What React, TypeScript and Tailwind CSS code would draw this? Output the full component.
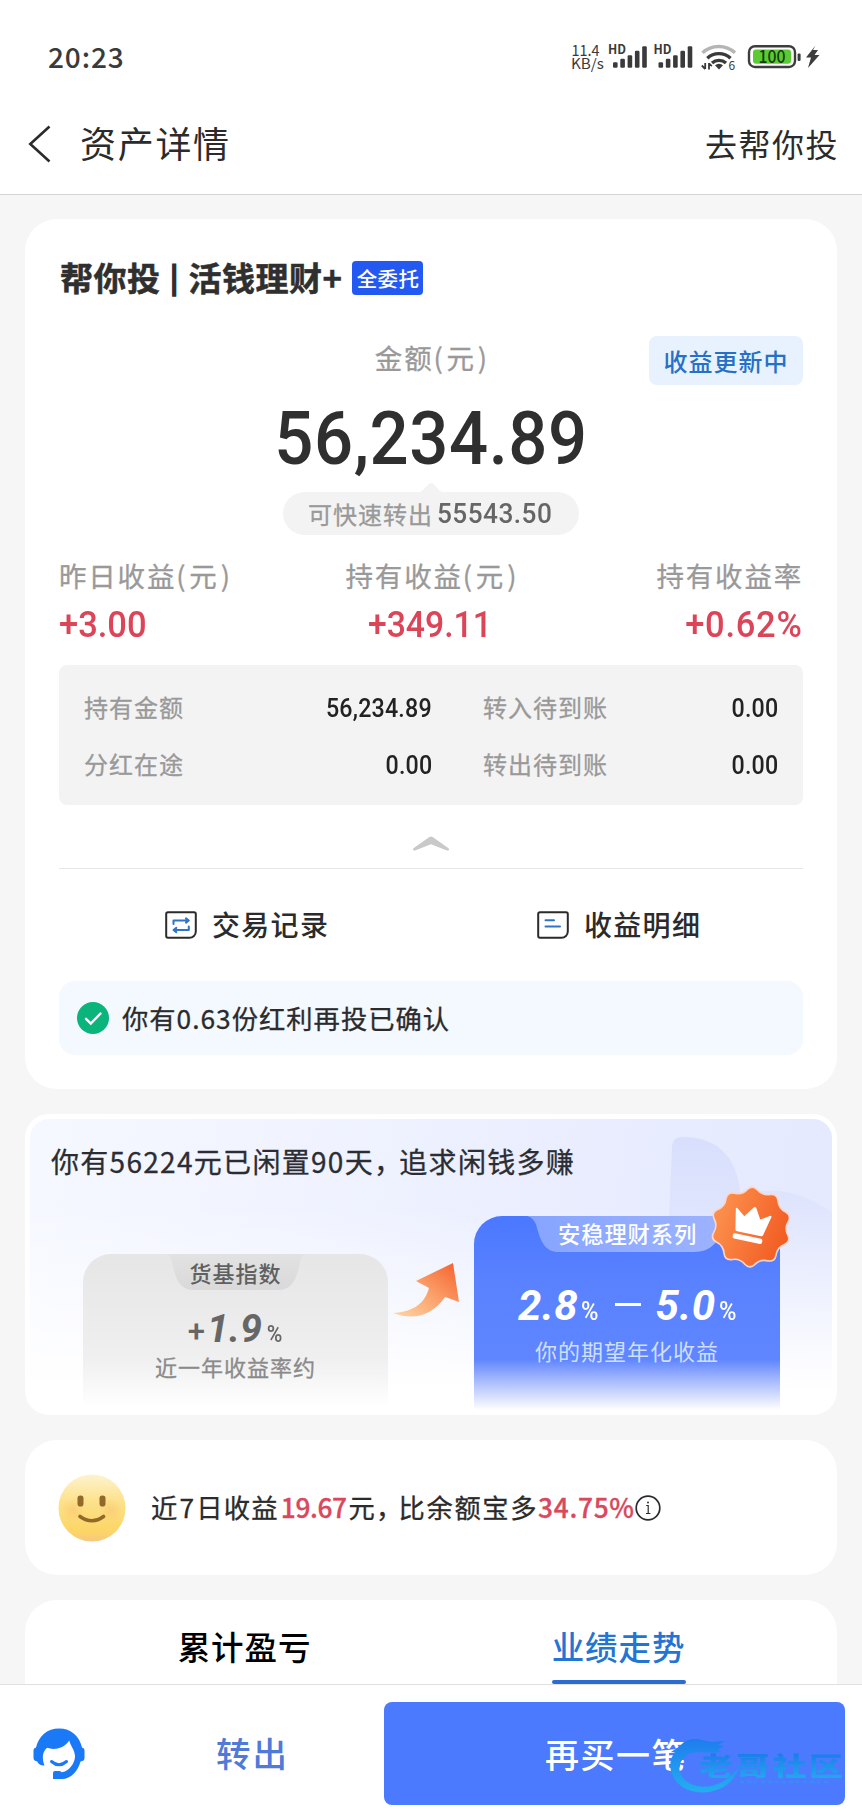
import type { ReactNode } from "react";

const ROOT_FONT = "font-['Noto_Sans_CJK_SC','Noto_Sans_CJK_JP',sans-serif]";
const NUM = "font-['Roboto','Liberation_Sans',sans-serif] font-medium";
const SOFT = "[-webkit-text-stroke:0.3px]";

function SignalBars({ x }: { x: number }) {
  const heights = [5.5, 9, 12.5, 17, 21.5];
  return (
    <g fill="#3a3a3a">
      {heights.map((h, i) => (
        <rect key={h} x={x + i * 7.3} y={24.7 - h} width="4.6" height={h} rx="1.2" />
      ))}
    </g>
  );
}

function StatusIcons() {
  return (
    <svg width="252" height="28" viewBox="0 0 252 28" className="overflow-visible font-['Noto_Sans_CJK_SC',sans-serif]">
      <g fill="#3a3a3a">
        <text x="0.5" y="12.6" fontSize="15.5" textLength="28" lengthAdjust="spacingAndGlyphs">11.4</text>
        <text x="0" y="25.8" fontSize="14.5" textLength="33" lengthAdjust="spacingAndGlyphs">KB/s</text>
        <text x="37" y="10.8" fontSize="12.5" fontWeight="700" textLength="18" lengthAdjust="spacingAndGlyphs">HD</text>
        <text x="82.5" y="10.8" fontSize="12.5" fontWeight="700" textLength="18" lengthAdjust="spacingAndGlyphs">HD</text>
        <text x="157.5" y="27.3" fontSize="12">6</text>
      </g>
      <SignalBars x={42} />
      <SignalBars x={87.5} />
      <g fill="none" strokeWidth="3.4">
        <path d="M131.5 9.8A24 24 0 0 1 164 9.8" stroke="#b5b5b5" />
        <path d="M136.3 15.2A17 17 0 0 1 159.5 15.2" stroke="#3a3a3a" />
        <path d="M141 20A10.5 10.5 0 0 1 155 20" stroke="#3a3a3a" />
      </g>
      <path d="M144 22.200a6 6 0 0 1 8 0L148 26.500z" fill="#3a3a3a" />
      <path d="M134.2 20v6M130.8 22.5l3.4 3.5M138 26.5v-6.500M140.8 23.2L138 20.500" fill="none" stroke="#3a3a3a" strokeWidth="1.8" />
      <rect x="178" y="3.2" width="46" height="20.8" rx="6" fill="#fff" stroke="#3d3d3d" strokeWidth="2.4" />
      <rect x="182" y="6.4" width="38" height="14.4" rx="3" fill="#5ccb33" />
      <text x="187.500" y="20" fontSize="17.500" fontWeight="500" fill="#143c0b" textLength="27" lengthAdjust="spacingAndGlyphs">100</text>
      <rect x="226.6" y="10.4" width="3" height="7.5" rx="1.2" fill="#3d3d3d" />
      <path d="M244.500 2.500l-9.500 12h5l-3 10.500 11.500-13h-5l3.500-5h-5z" fill="#3d3d3d" />
    </svg>
  );
}

function Header() {
  return (
    <header className="h-[195px] border-b border-[#d4d4d4] bg-white">
      <div className="flex h-[98px] items-start justify-between pt-[43px] pr-[39px] pl-[48px] text-[#3a3a3a]">
        <div className="-mt-px text-[28px] leading-[28px] font-medium tracking-[0.9px]">20:23</div>
        <StatusIcons />
      </div>
      <div className="flex h-[92px] items-center justify-between pr-[23px] pl-[28px] text-[#2b2b2b]">
        <div className="flex items-center">
          <svg width="24" height="40" viewBox="0 0 24 40" fill="none" stroke="#2b2b2b" strokeWidth="2.6" className="mr-[28px]">
            <path d="M21.5 2.5L2.3 20l19.2 17.5" />
          </svg>
          <h1 className="-mt-[5px] text-[36px] leading-none tracking-[1.7px]">资产详情</h1>
        </div>
        <div className="-mt-[2px] text-[32px] leading-none tracking-[1.5px]">去帮你投</div>
      </div>
    </header>
  );
}

function NoteIcon({ children }: { children: ReactNode }) {
  return (
    <svg width="32" height="28" viewBox="0 0 32 28" fill="none">
      <path d="M3 1.2H29a1.8 1.8 0 0 1 1.8 1.8V20.5a6.3 6.3 0 0 1-6.3 6.3H3A1.8 1.8 0 0 1 1.2 25V3A1.8 1.8 0 0 1 3 1.2z" stroke="#2b2b2b" strokeWidth="2" />
      <g stroke="#2f74c8" strokeWidth="2" strokeLinecap="round" strokeLinejoin="round">{children}</g>
    </svg>
  );
}

function Yuan() {
  return (
    <>
      <span className="tracking-[3.8px]">(</span>元<span className="ml-[2px] tracking-[0px]">)</span>
    </>
  );
}

function Stat({ label, unit, value, align, origin }: { label: string; unit?: boolean; value: string; align: string; origin: string }) {
  return (
    <div className={`flex flex-col ${align}`}>
      <div className={`flex h-[40px] items-center text-[27.5px] leading-none tracking-[1.8px] text-[#999] ${SOFT}`}>
        <span>{label}{unit && <Yuan />}</span>
      </div>
      <div className={`mt-[7px] flex h-[44px] items-center text-[37.5px] leading-none text-[#dc4558] ${NUM} ${origin}`}>{value}</div>
    </div>
  );
}

function Row({ label, value }: { label: string; value: string }) {
  return (
    <div className="flex h-[57px] items-center justify-between leading-none">
      <span className={`text-[24px] tracking-[1px] text-[#999] ${SOFT}`}>{label}</span>
      <span className={`mt-[3px] origin-right scale-x-[0.93] text-[25px] tracking-[0.2px] text-[#222] ${NUM}`}>{value}</span>
    </div>
  );
}

function AssetCard() {
  return (
    <section className="h-[870px] rounded-[32px] bg-white px-[34px] pt-[36px]">
      <div className="flex h-[46px] items-center leading-none">
        <h2 className="-mt-px flex items-center pl-px text-[33px] font-bold tracking-[0.5px] text-[#2f2f2f] [-webkit-text-stroke:0.5px]">
          <span>帮你投</span>
          <span className="-mt-1 w-[28px] text-center text-[28px] [-webkit-text-stroke:1.5px]">|</span>
          <span>活钱理财+</span>
        </h2>
        <span className="ml-[10px] flex h-[34px] w-[71px] items-center justify-center rounded-[4px] bg-[#2459f1] text-[20.5px] font-medium tracking-[0.4px] text-white">全委托</span>
      </div>

      <div className="mt-[35px] grid h-[49px] grid-cols-[1fr_auto_1fr] items-center leading-none">
        <span />
        <span className={`-mt-[6px] text-[27.5px] tracking-[1.8px] text-[#999] ${SOFT}`}>金额<Yuan /></span>
        <span className="flex h-[49px] w-[154px] items-center justify-center justify-self-end rounded-[8px] bg-[#e8f1fe] text-[24px] font-medium tracking-[1px] text-[#2571c8]">收益更新中</span>
      </div>

      <div className={`mt-[19px] flex h-[70px] scale-x-[0.93] items-center justify-center text-[74px] leading-none tracking-[0.6px] text-[#2f2f2f] ${NUM}`}>56,234.89</div>

      <div className="relative mx-auto mt-[18px] flex h-[43px] w-[296px] items-center pl-[25px] rounded-full bg-[#f3f3f3] leading-none">
        <svg width="28" height="10" viewBox="0 0 28 10" className="absolute -top-[9px] left-[134px]">
          <path d="M0 10C7 9 10 0 14 0s7 9 14 10z" fill="#f3f3f3" />
        </svg>
        <span className={`text-[24px] tracking-[1px] text-[#999] ${SOFT}`}>可快速转出</span>
        <span className={`mt-[2px] ml-[4px] origin-left scale-x-[0.92] text-[28.5px] tracking-[0.5px] text-[#666] ${NUM}`}>55543.50</span>
      </div>

      <div className="mt-[21px] grid grid-cols-[1fr_auto_1fr]">
        <Stat label="昨日收益" unit value="+3.00" align="items-start" origin="origin-left scale-x-[0.92]" />
        <Stat label="持有收益" unit value="+349.11" align="items-center" origin="origin-center scale-x-[0.9] -ml-[3px]" />
        <Stat label="持有收益率" value="+0.62%" align="items-end" origin="origin-right scale-x-[0.92] tracking-[0.8px]" />
      </div>

      <div className="mt-[18px] grid h-[140px] grid-cols-[348px_1fr] gap-x-[51px] rounded-[8px] bg-[#f3f3f3] px-[25px] py-[13px]">
        <Row label="持有金额" value="56,234.89" />
        <Row label="转入待到账" value="0.00" />
        <Row label="分红在途" value="0.00" />
        <Row label="转出待到账" value="0.00" />
      </div>

      <div className="flex h-[64px] justify-center border-b border-[#e6e6e6] pt-[30px]">
        <svg width="38" height="17" viewBox="0 0 38 17">
          <path d="M1.5 13.2L17 2.2q2-1.2 4 0l15.5 11q1.6 2.6-1.6 2.3L19 9.2 3.1 15.5q-3.2.3-1.6-2.3z" fill="#c9c9c9" />
        </svg>
      </div>

      <div className="grid h-[112px] grid-cols-2 text-[28px] leading-none font-medium tracking-[1.3px] text-[#2b2b2b]">
        <div className="flex items-center pl-[106px]">
          <NoteIcon>
            <path d="M8.5 13V9.5H23.5M21 7.4L23.8 9.5 21 11.6M23.8 15.5V19H8.8M11.3 16.9L8.5 19l2.8 2.1" />
          </NoteIcon>
          <span className="-mt-[2px] ml-[15px]">交易记录</span>
        </div>
        <div className="flex items-center pl-[106px]">
          <NoteIcon>
            <path d="M8.5 9.3H17M8.5 15.5H23" />
          </NoteIcon>
          <span className="-mt-[2px] ml-[15px]">收益明细</span>
        </div>
      </div>

      <div className="flex h-[74px] items-center rounded-[16px] bg-[#f4f8ff] pl-[18px] leading-none">
        <svg width="32" height="32" viewBox="0 0 32 32">
          <circle cx="16" cy="16" r="16" fill="#0bb47b" />
          <path d="M9 16.8l4.8 4.8L23.5 11.5" fill="none" stroke="#fff" strokeWidth="2.4" strokeLinecap="round" />
        </svg>
        <span className={`ml-[13px] text-[26.3px] tracking-[1px] text-[#2b2b2b] ${SOFT}`}>你有0.63份红利再投已确认</span>
      </div>
    </section>
  );
}

const BADGE_POINTS = Array.from({ length: 10 }, (_, i) => {
  const at = (deg: number, r: number) => {
    const a = ((deg - 90 + 2) * Math.PI) / 180;
    return `${(42 + r * Math.cos(a)).toFixed(1)} ${(42 + r * Math.sin(a)).toFixed(1)}`;
  };
  const d = i * 36;
  return `${i ? "L" : "M"}${at(d - 7, 38)}Q${at(d, 42)} ${at(d + 7, 38)}Q${at(d + 18, 33)} ${at(d + 29, 38)}`;
}).join("") + "Z";

function PromoCard() {
  return (
    <section className="relative mt-[25px] h-[301px] overflow-hidden rounded-[24px] border-[5px] border-white bg-[linear-gradient(180deg,rgba(255,255,255,0)_30%,#fff_93%),linear-gradient(100deg,#f6f8ff_0%,#f0f3ff_35%,#e9edfe_65%,#e4e9fe_100%)]">
      <svg width="802" height="291" viewBox="0 0 802 291" className="absolute top-0 left-0">
        <defs>
          <linearGradient id="leaf" x1="0" y1="0" x2="0" y2="1">
            <stop offset="0" stopColor="#d8dffc" />
            <stop offset="1" stopColor="#dfe5fd" stopOpacity="0.6" />
          </linearGradient>
          <linearGradient id="leafFade" x1="0" y1="0" x2="0" y2="1">
            <stop offset="0" stopColor="#dbe1fd" />
            <stop offset="1" stopColor="#eef1fe" stopOpacity="0" />
          </linearGradient>
        </defs>
        <path d="M637 150L642 27Q643 18 652 18C690 18 710 40 711 85V150z" fill="url(#leaf)" />
        <path d="M730 72Q765 68 802 93V230H730z" fill="url(#leafFade)" opacity="0.7" />
      </svg>

      <h3 className={`relative flex h-[84px] items-center pl-[21px] text-[28px] leading-none tracking-[1.3px] whitespace-nowrap text-[#2b2d33] ${SOFT}`}>
        你有56224元已闲置90天<span className="-mr-[4px]">，</span>追求闲钱多赚
      </h3>

      <div className="relative flex pl-[53px] leading-none">
        <div className="mt-[51px] flex h-[156px] w-[305px] flex-col items-center rounded-t-[28px] bg-[linear-gradient(180deg,#e6e6e6_0%,#ececec_45%,#efefef_65%,rgba(255,255,255,0)_98%)] text-[#666]">
          <div className="relative flex h-[36px] w-[136px] items-center justify-center">
            <svg width="136" height="36" viewBox="0 0 136 36" className="absolute top-0 left-0">
              <defs>
                <linearGradient id="greyTab" x1="0" y1="0" x2="0" y2="1">
                  <stop offset="0" stopColor="#e2e2e2" />
                  <stop offset="1" stopColor="#d9d9d9" />
                </linearGradient>
              </defs>
              <path d="M0 0H136Q133 3 131 12C128 28 122 36 110 36H26C14 36 8 28 5 12Q3 3 0 0z" fill="url(#greyTab)" />
            </svg>
            <span className="relative -mt-px text-[22px] font-medium tracking-[1px] text-[#606060]">货基指数</span>
          </div>
          <div className={`mt-[20px] flex h-[40px] items-baseline ${NUM}`}>
            <span className="text-[31px]">+</span>
            <span className="ml-[2px] text-[39px] font-bold tracking-[0.3px] italic">1.9</span>
            <span className="ml-[4px] scale-x-[0.92] text-[23px]">%</span>
          </div>
          <div className={`mt-[5px] text-[22px] tracking-[1px] text-[#8a8a8a] ${SOFT}`}>近一年收益率约</div>
        </div>

        <svg width="68" height="58" viewBox="0 0 68 58" className="mt-[59px] ml-[4px]">
          <defs>
            <linearGradient id="arrow" x1="0" y1="1" x2="1" y2="0">
              <stop offset="0" stopColor="#fdd9a8" />
              <stop offset="0.5" stopColor="#fba06a" />
              <stop offset="1" stopColor="#f4602c" />
            </linearGradient>
          </defs>
          <path d="M61 1L67 40 53 35C42 51 24 60 1 51 22 50 33 41 37 26L24 19z" fill="url(#arrow)" />
        </svg>

        <div className="relative mt-[13px] ml-[14px] h-[194px] w-[306px] rounded-t-[28px] bg-[linear-gradient(180deg,#4a78ff_0%,#5a82ff_35%,#5f86ff_74%,rgba(120,150,255,0.78)_82%,rgba(255,255,255,0)_100%)] text-white">
          <div className="relative ml-[53px] flex h-[36px] w-[200px] items-center pl-[31px]">
            <svg width="200" height="36" viewBox="0 0 200 36" className="absolute top-0 left-0">
              <defs>
                <linearGradient id="blueTab" x1="0" y1="0" x2="1" y2="0">
                  <stop offset="0" stopColor="#86a4ff" />
                  <stop offset="1" stopColor="#9db3ff" />
                </linearGradient>
              </defs>
              <path d="M0 0H200V4C192 20 190 36 166 36H32C18 36 14 26 10 12Q8 2 0 0z" fill="url(#blueTab)" />
            </svg>
            <span className="relative -mt-[2px] text-[22.3px] font-medium tracking-[0.9px]">安稳理财系列</span>
          </div>
          <div className={`mt-[33px] flex h-[42px] items-baseline pl-[44px] ${NUM}`}>
            <span className="text-[42px] font-bold tracking-[0.5px] italic">2.8</span>
            <span className="ml-[3px] origin-left scale-x-[0.95] text-[25px]">%</span>
            <span className="ml-[15px] h-[3px] w-[26px] -translate-y-[21px] self-end bg-white" />
            <span className="ml-[15px] text-[42px] font-bold tracking-[0.5px] italic">5.0</span>
            <span className="ml-[3px] origin-left scale-x-[0.95] text-[25px]">%</span>
          </div>
          <div className="mt-[12px] pl-[61px] text-[22px] tracking-[1px] text-[#cfdfff]">你的期望年化收益</div>
        </div>
      </div>

      <svg width="84" height="84" viewBox="0 0 84 84" className="absolute top-[66px] left-[679px]">
        <defs>
          <linearGradient id="badge" x1="0" y1="0.2" x2="1" y2="0.6">
            <stop offset="0" stopColor="#fd9550" />
            <stop offset="1" stopColor="#f25b22" />
          </linearGradient>
        </defs>
        <path d={BADGE_POINTS} fill="url(#badge)" stroke="#fbd6cd" strokeWidth="1.6" />
        <g transform="rotate(12 42 42)" fill="#fff">
          <path d="M23.500 28q-.8-3 2-1.2l7.700 6 7.400-10.500q1.400-1.600 2.6 0l6.300 10.500 8.500-5.500q2.400-1 1.800 1.500L55.500 47.500q-.3 1.500-1.800 1.500H29.200q-1.7 0-2-1.5z" />
          <rect x="26" y="51.500" width="30" height="5.200" rx="1.8" />
        </g>
      </svg>
    </section>
  );
}

function Smiley() {
  return (
    <svg width="68" height="68" viewBox="0 0 68 68">
      <defs>
        <linearGradient id="face" x1="0.5" y1="0" x2="0.5" y2="1">
          <stop offset="0" stopColor="#fdf3cf" />
          <stop offset="0.4" stopColor="#fde28b" />
          <stop offset="0.85" stopColor="#fcd565" />
          <stop offset="1" stopColor="#f6c882" />
        </linearGradient>
        <radialGradient id="cheek">
          <stop offset="0" stopColor="#fbb86c" stopOpacity="0.4" />
          <stop offset="1" stopColor="#fbb86c" stopOpacity="0" />
        </radialGradient>
      </defs>
      <circle cx="34" cy="34" r="33.5" fill="url(#face)" />
      <circle cx="15" cy="36" r="12" fill="url(#cheek)" />
      <circle cx="53" cy="36" r="12" fill="url(#cheek)" />
      <rect x="19.5" y="21.5" width="6" height="11" rx="2.8" fill="#91692a" />
      <rect x="41.5" y="21.5" width="6" height="11" rx="2.8" fill="#91692a" />
      <path d="M22 42.5q12 8.5 23.500 0" fill="none" stroke="#91692a" strokeWidth="3.6" strokeLinecap="round" />
    </svg>
  );
}

function CompareCard() {
  return (
    <section className="mt-[25px] flex h-[135px] items-center rounded-[32px] bg-white pl-[33px] leading-none">
      <Smiley />
      <div className={`ml-[25px] text-[26.3px] tracking-[1.2px] whitespace-nowrap text-[#2b2b2b] ${SOFT}`}>
        近<span className="mx-px">7</span>日收益<span className="mx-[2px] font-medium tracking-[-0.4px] text-[#d9485c]">19.67</span>元<span className="-mr-[5px]">，</span>
        <span className="tracking-[1.6px]">比余额宝多</span>
        <span className="font-medium tracking-[0.7px] text-[#d9485c]">34.75%</span>
      </div>
      <svg width="26" height="26" viewBox="0 0 26 26" fill="none" stroke="#2b2b2b" strokeWidth="1.7">
        <circle cx="13" cy="13" r="11.8" />
        <path d="M11.200 10.500H13.200V18.200M11 18.500H15.400" strokeWidth="1.2" />
        <circle cx="13" cy="7.500" r="0.400" strokeWidth="1.2" />
      </svg>
    </section>
  );
}

function TabsCard() {
  return (
    <section className="mt-[25px] grid h-[120px] grid-cols-2 rounded-[32px] bg-white text-[32.5px] leading-none font-medium tracking-[0.9px]">
      <div className="flex h-[84px] items-center justify-center pt-[8px] pl-[33px] text-black">累计盈亏</div>
      <div className="flex h-[84px] flex-col items-center justify-end pr-[31px] text-[#2474d4]">
        <span>业绩走势</span>
        <span className="mt-[18px] h-[4px] w-[134px] rounded-full bg-[#2a6cd0]" />
      </div>
    </section>
  );
}

function ServiceIcon() {
  return (
    <svg width="52" height="52" viewBox="0 0 52 52">
      <path d="M26 .5C14.500.500 6 7.500 3 19.500Q.500 20 .500 22V30Q.500 33 4 33.200Q6.500 38 11.500 37.500C9 31 9 24 14 19.800C21 22.500 31 20.500 36.300 12.500C37.500 18 42 22 42 28.500C42 35 36 43.500 28.500 44.300Q27.800 43 26 43H22Q20 43 20 45V51H29C38 51 45 43 47.500 33.500Q51.500 33 51.500 30V22Q51.500 20 49 19.500C46.500 8 38 .500 26 .500z" fill="#1a79f7" />
      <path d="M18.500 33.500q7.500 6.500 15 0" fill="none" stroke="#1a79f7" strokeWidth="3" strokeLinecap="round" />
    </svg>
  );
}

function Watermark() {
  return (
    <div className="absolute top-[35px] left-[284px] h-[56px] w-[177px]">
      <svg width="177" height="56" viewBox="0 0 177 56" className="absolute top-0 left-0">
        <defs>
          <linearGradient id="swirl" x1="0" y1="0" x2="0" y2="1">
            <stop offset="0" stopColor="#1f7cee" />
            <stop offset="1" stopColor="#22b0ee" />
          </linearGradient>
        </defs>
        <path d="M12 9C20 0 28 2 34 3L44 5 57 4 50 8 56 9 50 13 54 15C42 17 28 13 20 17C10 24 8 36 18 44C32 55 58 50 71 29C66 52 38 61 18 52C2 44-2 26 7 15L3 15z" fill="url(#swirl)" />
      </svg>
      <span className="absolute top-[11px] left-[31px] scale-y-[0.76] bg-[linear-gradient(180deg,#1b7aea,#22a8ee)] bg-clip-text text-[34px] leading-[34px] font-black tracking-[2.700px] whitespace-nowrap text-transparent">老哥社区</span>
      <svg width="90" height="4" viewBox="0 0 90 4" className="absolute top-[43px] left-[72px]">
        <path d="M0 2H88" stroke="#3a8bf8" strokeWidth="2.500" strokeDasharray="4 3 5 2 3 4" />
      </svg>
    </div>
  );
}

function Footer() {
  return (
    <footer className="flex h-[133px] border-t border-[#e0e0e0] bg-white pr-[17px] leading-none">
      <div className="flex w-[384px] items-center pt-[3px] pl-[33px]">
        <div className="mt-[2px]"><ServiceIcon /></div>
        <span className="ml-[131px] text-[34.5px] font-medium tracking-[2px] text-[#4f7ad8]">转出</span>
      </div>
      <button className="relative mt-[17px] flex h-[103px] flex-1 items-center rounded-[8px] bg-[#4c7afe] pl-[161px] text-[34px] font-medium tracking-[1.500px] text-white">
        再买一笔
        <Watermark />
      </button>
    </footer>
  );
}

export default function App() {
  return (
    <div className={`flex h-[1817px] w-[862px] flex-col overflow-hidden bg-[#f6f6f6] ${ROOT_FONT}`}>
      <Header />
      <main className="h-[1489px] overflow-hidden px-[25px] pt-[24px]">
        <AssetCard />
        <PromoCard />
        <CompareCard />
        <TabsCard />
      </main>
      <Footer />
    </div>
  );
}
